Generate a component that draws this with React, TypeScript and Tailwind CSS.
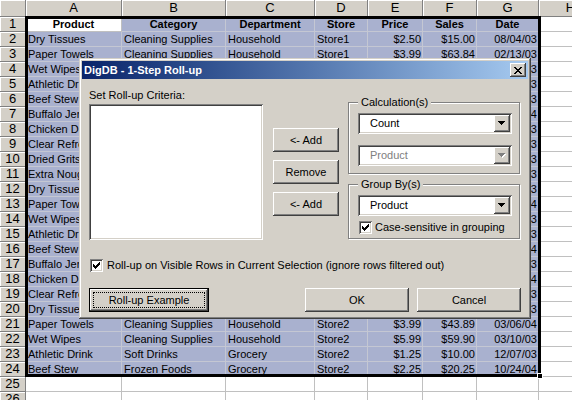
import React from "react";

const raised =
  "shadow-[inset_-1px_-1px_#404040,inset_1px_1px_#ffffff,inset_-2px_-2px_#808080,inset_2px_2px_#d4d0c8]";
const sunken =
  "shadow-[inset_1px_1px_#808080,inset_-1px_-1px_#ffffff,inset_2px_2px_#404040,inset_-2px_-2px_#d4d0c8]";

const letters = ["A", "B", "C", "D", "E", "F", "G", "H"];
const headerRow = ["Product", "Category", "Department", "Store", "Price", "Sales", "Date"];

const data: string[][] = [
  ["Dry Tissues", "Cleaning Supplies", "Household", "Store1", "$2.50", "$15.00", "08/04/03"],
  ["Paper Towels", "Cleaning Supplies", "Household", "Store1", "$3.99", "$63.84", "02/13/03"],
  ["Wet Wipes", "Cleaning Supplies", "Household", "Store1", "$5.99", "$47.92", "05/21/03"],
  ["Athletic Drink", "Soft Drinks", "Grocery", "Store1", "$1.25", "$12.50", "11/02/03"],
  ["Beef Stew", "Frozen Foods", "Grocery", "Store1", "$2.25", "$18.00", "06/15/03"],
  ["Buffalo Jerky", "Snacks", "Grocery", "Store1", "$4.50", "$27.00", "01/09/04"],
  ["Chicken Dinner", "Frozen Foods", "Grocery", "Store1", "$3.75", "$30.00", "09/18/03"],
  ["Clear Refresher", "Soft Drinks", "Grocery", "Store1", "$1.10", "$8.80", "07/22/03"],
  ["Dried Grits", "Breakfast", "Grocery", "Store1", "$2.80", "$22.40", "04/30/03"],
  ["Extra Nougat", "Candy", "Grocery", "Store1", "$0.89", "$7.12", "10/11/03"],
  ["Dry Tissues", "Cleaning Supplies", "Household", "Store2", "$2.50", "$20.00", "12/03/03"],
  ["Paper Towels", "Cleaning Supplies", "Household", "Store2", "$3.99", "$31.92", "02/05/04"],
  ["Wet Wipes", "Cleaning Supplies", "Household", "Store2", "$5.99", "$35.94", "03/27/03"],
  ["Athletic Drink", "Soft Drinks", "Grocery", "Store2", "$1.25", "$11.25", "08/14/03"],
  ["Beef Stew", "Frozen Foods", "Grocery", "Store2", "$2.25", "$15.75", "01/23/04"],
  ["Buffalo Jerky", "Snacks", "Grocery", "Store2", "$4.50", "$36.00", "06/29/03"],
  ["Chicken Dinner", "Frozen Foods", "Grocery", "Store2", "$3.75", "$22.50", "04/07/04"],
  ["Clear Refresher", "Soft Drinks", "Grocery", "Store2", "$1.10", "$9.90", "11/06/03"],
  ["Dry Tissues", "Cleaning Supplies", "Household", "Store2", "$2.50", "$17.50", "05/19/03"],
  ["Paper Towels", "Cleaning Supplies", "Household", "Store2", "$3.99", "$43.89", "03/06/04"],
  ["Wet Wipes", "Cleaning Supplies", "Household", "Store2", "$5.99", "$59.90", "03/10/03"],
  ["Athletic Drink", "Soft Drinks", "Grocery", "Store2", "$1.25", "$10.00", "12/07/03"],
  ["Beef Stew", "Frozen Foods", "Grocery", "Store2", "$2.25", "$20.25", "10/24/04"],
];

const hdr =
  "bg-[#d4d0c8] border-r border-b border-[#808080] shadow-[inset_1px_1px_#ffffff] flex items-center justify-center overflow-hidden";

function Sheet() {
  const cells: React.ReactNode[] = [];
  cells.push(<div key="corner" className={hdr} />);
  letters.forEach((l) => {
    cells.push(
      <div key={"h" + l} className={`${hdr} text-[13px] leading-[16px]`}>
        {l}
      </div>
    );
  });
  for (let r = 1; r <= 26; r++) {
    cells.push(
      <div key={"r" + r} className={`${hdr} text-[13px] leading-[14px]`}>
        {r}
      </div>
    );
    for (let c = 0; c < 8; c++) {
      const inSel = r <= 24 && c < 7;
      const active = r === 1 && c === 0;
      let text = "";
      let align = "justify-start pl-[2px]";
      let weight = "";
      if (inSel) {
        if (r === 1) {
          text = headerRow[c];
          align = "justify-center";
          weight = "font-bold";
        } else {
          text = data[r - 2][c];
          if (c >= 4) align = "justify-end pr-[1px]";
        }
      }
      const bg = active ? "bg-white" : inSel ? "bg-[#a9b1cf]" : "bg-white";
      const line = inSel && !active ? "border-[#c4c7d3]" : "border-[#c0c0c0]";
      cells.push(
        <div
          key={r + "-" + c}
          className={`flex items-center overflow-hidden whitespace-nowrap border-r border-b ${line} ${bg} ${align} ${weight} text-[11px] leading-[14px]`}
        >
          {text}
        </div>
      );
    }
  }
  return (
    <div className="grid grid-cols-[26px_96px_104px_89px_53px_55px_54px_62px_64px] grid-rows-[17px] auto-rows-[15px]">
      {cells}
    </div>
  );
}

function Arrow({ disabled }: { disabled?: boolean }) {
  return (
    <div className={`w-[16px] h-[17px] bg-[#d4d0c8] ${raised} flex items-center justify-center`}>
      <svg width="8" height="5" viewBox="0 0 8 5" shapeRendering="crispEdges">
        {disabled && (
          <g fill="#ffffff">
            <rect x="1" y="1" width="7" height="1" />
            <rect x="2" y="2" width="5" height="1" />
            <rect x="3" y="3" width="3" height="1" />
            <rect x="4" y="4" width="1" height="1" />
          </g>
        )}
        <g fill={disabled ? "#808080" : "#000000"}>
          <rect x="0" y="0" width="7" height="1" />
          <rect x="1" y="1" width="5" height="1" />
          <rect x="2" y="2" width="3" height="1" />
          <rect x="3" y="3" width="1" height="1" />
        </g>
      </svg>
    </div>
  );
}

function Combo({ value, disabled }: { value: string; disabled?: boolean }) {
  return (
    <div className={`flex h-[21px] w-[154px] bg-white p-[2px] ${sunken}`}>
      <div
        className={`flex-1 pl-[10px] text-[11px] leading-[17px] ${
          disabled ? "text-[#808080]" : "text-black"
        }`}
      >
        {value}
      </div>
      <Arrow disabled={disabled} />
    </div>
  );
}

function Check() {
  return (
    <div className={`w-[13px] h-[13px] bg-white ${sunken} flex items-center justify-center shrink-0`}>
      <svg width="7" height="7" viewBox="0 0 7 7" shapeRendering="crispEdges">
        <g fill="#000000">
          <rect x="6" y="0" width="1" height="1" />
          <rect x="5" y="1" width="2" height="1" />
          <rect x="0" y="2" width="1" height="1" />
          <rect x="4" y="2" width="3" height="1" />
          <rect x="0" y="3" width="2" height="1" />
          <rect x="3" y="3" width="3" height="1" />
          <rect x="0" y="4" width="5" height="1" />
          <rect x="1" y="5" width="3" height="1" />
          <rect x="2" y="6" width="1" height="1" />
        </g>
      </svg>
    </div>
  );
}

function Btn({ children, w }: { children: React.ReactNode; w: string }) {
  return (
    <div
      className={`${w} h-[24px] bg-[#d4d0c8] ${raised} flex items-center justify-center text-[11px] leading-[13px]`}
    >
      {children}
    </div>
  );
}

function Group({
  label,
  h,
  children,
  mt,
}: {
  label: string;
  h: string;
  children: React.ReactNode;
  mt: string;
}) {
  return (
    <div
      className={`relative ${mt} ${h} border border-[#808080] shadow-[inset_1px_1px_#ffffff,1px_1px_#ffffff] pt-[10px] pl-[9px]`}
    >
      <span className="absolute top-[-7px] left-[9px] px-[3px] bg-[#d4d0c8] text-[11px] leading-[13px]">
        {label}
      </span>
      {children}
    </div>
  );
}

function Dialog() {
  return (
    <div
      className={`absolute left-[79px] top-[58px] w-[452px] h-[261px] bg-[#d4d0c8] p-[3px] flex flex-col shadow-[inset_-1px_-1px_#404040,inset_1px_1px_#d4d0c8,inset_-2px_-2px_#808080,inset_2px_2px_#ffffff]`}
    >
      <div className="h-[18px] flex items-center bg-gradient-to-r from-[#0a246a] to-[#a6caf0] pl-[2px] pr-[2px]">
        <span className="text-white font-bold text-[11px] leading-[13px]">DigDB - 1-Step Roll-up</span>
        <div className={`ml-auto w-[16px] h-[14px] bg-[#d4d0c8] ${raised} flex items-center justify-center`}>
          <svg width="8" height="7" viewBox="0 0 8 7" shapeRendering="crispEdges">
            <g fill="#000000">
              <rect x="0" y="0" width="2" height="1" />
              <rect x="6" y="0" width="2" height="1" />
              <rect x="1" y="1" width="2" height="1" />
              <rect x="5" y="1" width="2" height="1" />
              <rect x="2" y="2" width="4" height="1" />
              <rect x="3" y="3" width="2" height="1" />
              <rect x="2" y="4" width="4" height="1" />
              <rect x="1" y="5" width="2" height="1" />
              <rect x="5" y="5" width="2" height="1" />
              <rect x="0" y="6" width="2" height="1" />
              <rect x="6" y="6" width="2" height="1" />
            </g>
          </svg>
        </div>
      </div>
      <div className="flex flex-col pl-[7px] pr-[7px] pt-[10px]">
        <div className="flex">
          <div className="w-[174px] flex flex-col">
            <div className="h-[13px] text-[11px] leading-[13px]">Set Roll-up Criteria:</div>
            <div className={`mt-[2px] h-[136px] bg-white ${sunken}`} />
          </div>
          <div className="ml-[10px] w-[66px] mt-[39px] flex flex-col gap-[8px]">
            <Btn w="w-[66px]">&lt;- Add</Btn>
            <Btn w="w-[66px]">Remove</Btn>
            <Btn w="w-[66px]">&lt;- Add</Btn>
          </div>
          <div className="ml-[9px] w-[172px] flex flex-col">
            <Group label="Calculation(s)" h="h-[72px]" mt="mt-[13px]">
              <Combo value="Count" />
              <div className="mt-[11px]">
                <Combo value="Product" disabled />
              </div>
            </Group>
            <Group label="Group By(s)" h="h-[55px]" mt="mt-[10px]">
              <Combo value="Product" />
              <div className="mt-[5px] ml-[1px] flex items-center gap-[3px]">
                <Check />
                <span className="text-[11px] leading-[13px]">Case-sensitive in grouping</span>
              </div>
            </Group>
          </div>
        </div>
        <div className="mt-[19px] ml-[1px] flex items-center gap-[4px]">
          <Check />
          <span className="text-[11px] leading-[13px]">
            Roll-up on Visible Rows in Current Selection (ignore rows filtered out)
          </span>
        </div>
        <div className="mt-[16px] flex">
          <div className="w-[120px] h-[24px] border border-black bg-[#d4d0c8] shadow-[inset_-1px_-1px_#404040,inset_1px_1px_#ffffff,inset_-2px_-2px_#808080] flex">
            <div className="m-[3px] flex-1 border border-dotted border-black flex items-center justify-center text-[11px] leading-[13px]">
              Roll-up Example
            </div>
          </div>
          <div className="ml-auto flex gap-[8px]">
            <Btn w="w-[104px]">OK</Btn>
            <Btn w="w-[104px]">Cancel</Btn>
          </div>
        </div>
      </div>
    </div>
  );
}

export default function App() {
  return (
    <div className="relative w-[572px] h-[400px] overflow-hidden bg-white text-black font-['Liberation_Sans',Arial,sans-serif]">
      <Sheet />
      <div className="absolute left-[25px] top-[16px] w-[516px] h-[361px] border-[3px] border-black pointer-events-none" />
      <div className="absolute left-[537px] top-[373px] w-[6px] h-[6px] bg-black border border-white" />
      <Dialog />
    </div>
  );
}
